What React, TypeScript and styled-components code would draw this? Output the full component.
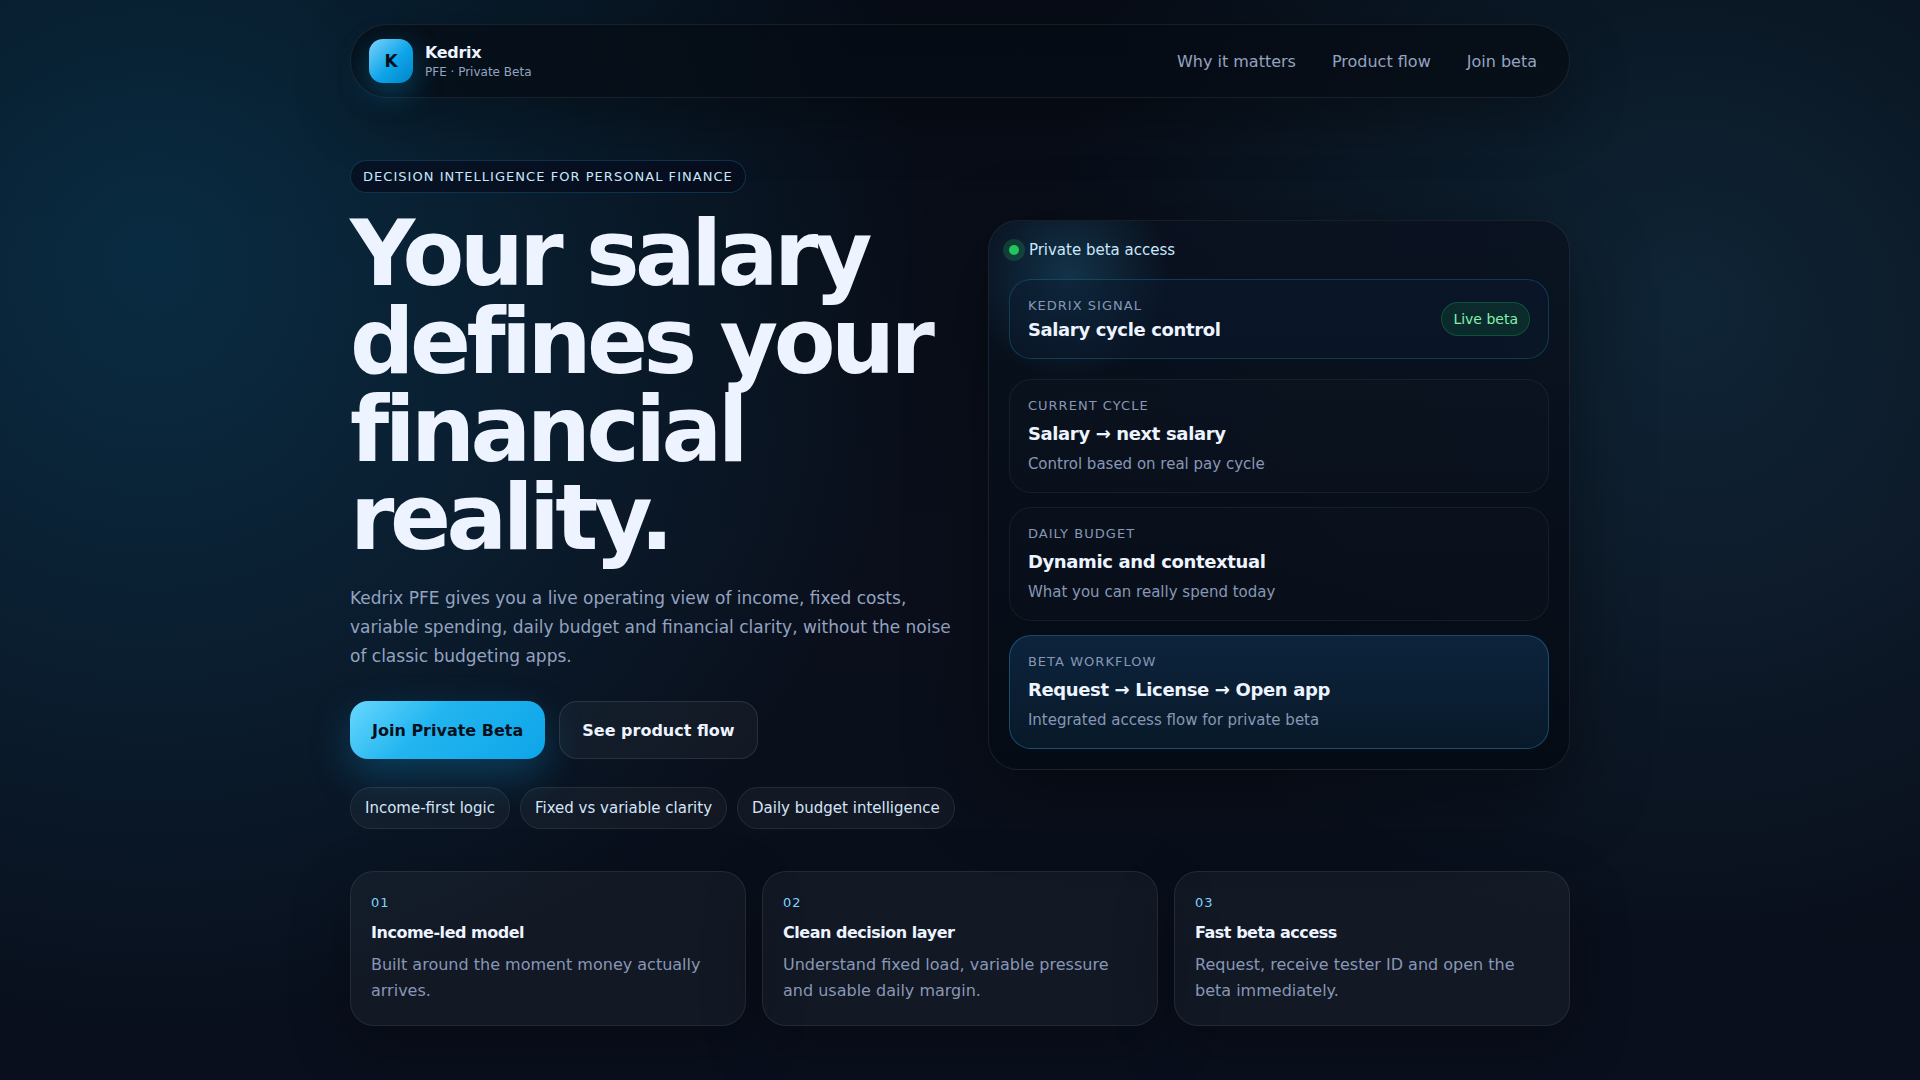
import React from "react";
import styled, { createGlobalStyle, css } from "styled-components";

const GlobalStyle = createGlobalStyle`
  *, *::before, *::after { box-sizing: border-box; }
  html { background: #080e1b; }
  body {
    margin: 0;
    min-height: 100vh;
    color: #edf4ff;
    font-family: "DejaVu Sans", Verdana, sans-serif;
    font-size: 16px;
    background:
      radial-gradient(circle at 8% 24%, rgba(14, 165, 233, 0.2), transparent 40%),
      radial-gradient(circle at 88% 28%, rgba(56, 189, 248, 0.13), transparent 35%),
      linear-gradient(180deg, #070c16 0%, #0a0f1b 50%, #090f1c 100%);
  }
  h1, h2, h3, p, ul { margin: 0; padding: 0; }
  a { color: inherit; text-decoration: none; }
`;

const Page = styled.div`
  width: min(1220px, calc(100% - 40px));
  margin: 0 auto;
  padding: 24px 0 54px;
`;

const Header = styled.header`
  display: flex;
  align-items: center;
  justify-content: space-between;
  padding: 14px 18px;
  border: 1px solid rgba(255, 255, 255, 0.08);
  border-radius: 999px;
  background: rgba(6, 11, 19, 0.72);
  box-shadow: 0 20px 60px rgba(0, 0, 0, 0.3);
`;

const Brand = styled.a`
  display: flex;
  align-items: center;
  gap: 12px;
`;

const Logo = styled.span`
  display: grid;
  place-items: center;
  width: 44px;
  height: 44px;
  border-radius: 14px;
  background: linear-gradient(135deg, #7dd3fc, #0ea5e9 55%, #0284c7);
  box-shadow: 0 10px 30px rgba(14, 165, 233, 0.35);
  color: #04111d;
  font-size: 17px;
  font-weight: 700;
`;

const BrandText = styled.span`
  display: flex;
  flex-direction: column;
  gap: 3px;
`;

const BrandName = styled.strong`
  font-size: 16px;
  line-height: 19px;
  letter-spacing: -0.02em;
`;

const BrandSub = styled.span`
  color: #94a3c0;
  font-size: 12px;
  line-height: 14px;
`;

const Nav = styled.nav`
  display: flex;
  gap: 8px;
`;

const NavLink = styled.a`
  padding: 10px 14px;
  color: #94a3c0;
`;

const Hero = styled.section`
  display: grid;
  grid-template-columns: 1.02fr 0.98fr;
  gap: 32px;
  align-items: center;
  padding-top: 62px;
`;

const HeroCopy = styled.div`
  display: flex;
  flex-direction: column;
  align-items: flex-start;
  min-width: 0;
`;

const Eyebrow = styled.span`
  padding: 8px 12px;
  border: 1px solid rgba(56, 189, 248, 0.2);
  border-radius: 999px;
  background: rgba(6, 12, 28, 0.7);
  color: #c9e8fb;
  font-size: 13px;
  line-height: 15px;
  letter-spacing: 0.08em;
  text-transform: uppercase;
`;

const Title = styled.h1`
  margin-top: 17px;
  font-size: 90px;
  line-height: 88px;
  letter-spacing: -0.05em;
`;

const Lead = styled.p`
  margin-top: 22px;
  color: #94a3c0;
  font-size: 17px;
  line-height: 29px;
`;

const Actions = styled.div`
  display: flex;
  flex-wrap: wrap;
  gap: 14px;
  margin-top: 30px;
`;

const Action = styled.a<{ $primary?: boolean }>`
  display: inline-flex;
  align-items: center;
  min-height: 58px;
  padding: 0 22px;
  border-radius: 18px;
  font-weight: 700;
  ${({ $primary }) =>
    $primary
      ? css`
          background: linear-gradient(135deg, #67d8ff, #22b5ef 40%, #0ea5e9);
          box-shadow: 0 16px 40px rgba(14, 165, 233, 0.28);
          color: #04111d;
        `
      : css`
          border: 1px solid rgba(255, 255, 255, 0.1);
          background: rgba(255, 255, 255, 0.04);
        `}
`;

const Chips = styled.ul`
  display: flex;
  flex-wrap: wrap;
  gap: 10px;
  margin-top: 28px;
  list-style: none;
`;

const Chip = styled.li`
  padding: 11px 14px;
  border: 1px solid rgba(255, 255, 255, 0.08);
  border-radius: 999px;
  background: rgba(255, 255, 255, 0.04);
  color: #d5e4f7;
  font-size: 15px;
  line-height: 18px;
`;

const Panel = styled.aside`
  position: relative;
  overflow: hidden;
  padding: 20px;
  border: 1px solid rgba(255, 255, 255, 0.08);
  border-radius: 30px;
  background: linear-gradient(180deg, rgba(10, 18, 32, 0.9), rgba(5, 11, 20, 0.92));
  box-shadow: 0 24px 80px rgba(0, 0, 0, 0.4);
`;

const Glow = styled.div`
  position: absolute;
  top: -64px;
  left: -40px;
  width: 240px;
  height: 240px;
  background: radial-gradient(circle closest-side, rgba(56, 189, 248, 0.2), transparent 84%);
`;

const PanelBody = styled.div`
  position: relative;
  display: flex;
  flex-direction: column;
`;

const Status = styled.div`
  display: flex;
  align-items: center;
  gap: 10px;
  color: #c9e8fb;
  font-size: 15px;
  line-height: 18px;
`;

const Dot = styled.span`
  width: 10px;
  height: 10px;
  border-radius: 50%;
  background: #22c55e;
  box-shadow: 0 0 0 6px rgba(34, 197, 94, 0.2);
`;

const Signal = styled.div`
  display: flex;
  align-items: center;
  justify-content: space-between;
  margin-top: 20px;
  padding: 18px;
  border: 1px solid rgba(56, 189, 248, 0.22);
  border-radius: 22px;
  background: rgba(10, 25, 46, 0.5);
`;

const Label = styled.p`
  color: #8797b5;
  font-size: 13px;
  line-height: 15px;
  letter-spacing: 0.08em;
  text-transform: uppercase;
`;

const Heading = styled.h2`
  font-size: 18px;
  line-height: 21px;
  letter-spacing: -0.02em;
`;

const SignalText = styled.div`
  display: flex;
  flex-direction: column;
  gap: 6px;
`;

const Badge = styled.span`
  padding: 8px 11px;
  border: 1px solid rgba(34, 197, 94, 0.25);
  border-radius: 999px;
  background: rgba(34, 197, 94, 0.12);
  color: #86efac;
  font-size: 14px;
  line-height: 16px;
`;

const Steps = styled.div`
  display: flex;
  flex-direction: column;
  gap: 14px;
  margin-top: 20px;
`;

const Step = styled.div<{ $active?: boolean }>`
  display: flex;
  flex-direction: column;
  gap: 10px;
  padding: 18px;
  border: 1px solid ${({ $active }) => ($active ? "rgba(56, 189, 248, 0.3)" : "rgba(255, 255, 255, 0.06)")};
  border-radius: 22px;
  background: ${({ $active }) =>
    $active
      ? "linear-gradient(180deg, rgba(14, 40, 68, 0.85), rgba(10, 32, 50, 0.7))"
      : "rgba(255, 255, 255, 0.01)"};
`;

const StepNote = styled.p`
  color: #8797b5;
  font-size: 15px;
  line-height: 20px;
`;

const Features = styled.section`
  display: grid;
  grid-template-columns: repeat(3, 1fr);
  gap: 16px;
  margin-top: 42px;
`;

const Feature = styled.article`
  padding: 21px 20px;
  border: 1px solid rgba(255, 255, 255, 0.08);
  border-radius: 24px;
  background: rgba(255, 255, 255, 0.04);
  box-shadow: 0 20px 60px rgba(0, 0, 0, 0.25);
`;

const FeatureNumber = styled.p`
  color: #7dd3fc;
  font-size: 13px;
  line-height: 20px;
  letter-spacing: 0.08em;
`;

const FeatureTitle = styled.h3`
  margin-top: 10px;
  font-size: 16px;
  line-height: 20px;
  letter-spacing: -0.03em;
`;

const FeatureText = styled.p`
  margin-top: 9px;
  color: #8797b5;
  line-height: 26px;
`;

const links = [
  { label: "Why it matters", href: "#why" },
  { label: "Product flow", href: "#flow" },
  { label: "Join beta", href: "#join" },
];

const chips = ["Income-first logic", "Fixed vs variable clarity", "Daily budget intelligence"];

const steps = [
  { label: "Current cycle", title: "Salary → next salary", note: "Control based on real pay cycle" },
  { label: "Daily budget", title: "Dynamic and contextual", note: "What you can really spend today" },
  {
    label: "Beta workflow",
    title: "Request → License → Open app",
    note: "Integrated access flow for private beta",
    active: true,
  },
];

const features = [
  { title: "Income-led model", text: "Built around the moment money actually arrives." },
  { title: "Clean decision layer", text: "Understand fixed load, variable pressure and usable daily margin." },
  { title: "Fast beta access", text: "Request, receive tester ID and open the beta immediately." },
];

export default function App() {
  return (
    <>
      <GlobalStyle />
      <Page>
        <Header>
          <Brand href="#top">
            <Logo>K</Logo>
            <BrandText>
              <BrandName>Kedrix</BrandName>
              <BrandSub>PFE · Private Beta</BrandSub>
            </BrandText>
          </Brand>
          <Nav>
            {links.map((link) => (
              <NavLink key={link.href} href={link.href}>
                {link.label}
              </NavLink>
            ))}
          </Nav>
        </Header>

        <main>
          <Hero>
            <HeroCopy>
              <Eyebrow>Decision intelligence for personal finance</Eyebrow>
              <Title>Your salary defines your financial reality.</Title>
              <Lead>
                Kedrix PFE gives you a live operating view of income, fixed costs, variable spending, daily budget and
                financial clarity, without the noise of classic budgeting apps.
              </Lead>
              <Actions>
                <Action href="#join" $primary>
                  Join Private Beta
                </Action>
                <Action href="#flow">See product flow</Action>
              </Actions>
              <Chips>
                {chips.map((chip) => (
                  <Chip key={chip}>{chip}</Chip>
                ))}
              </Chips>
            </HeroCopy>

            <Panel>
              <Glow />
              <PanelBody>
                <Status>
                  <Dot />
                  Private beta access
                </Status>
                <Signal>
                  <SignalText>
                    <Label>Kedrix signal</Label>
                    <Heading>Salary cycle control</Heading>
                  </SignalText>
                  <Badge>Live beta</Badge>
                </Signal>
                <Steps>
                  {steps.map((step) => (
                    <Step key={step.label} $active={step.active}>
                      <Label>{step.label}</Label>
                      <Heading>{step.title}</Heading>
                      <StepNote>{step.note}</StepNote>
                    </Step>
                  ))}
                </Steps>
              </PanelBody>
            </Panel>
          </Hero>

          <Features>
            {features.map((feature, index) => (
              <Feature key={feature.title}>
                <FeatureNumber>{String(index + 1).padStart(2, "0")}</FeatureNumber>
                <FeatureTitle>{feature.title}</FeatureTitle>
                <FeatureText>{feature.text}</FeatureText>
              </Feature>
            ))}
          </Features>
        </main>
      </Page>
    </>
  );
}
